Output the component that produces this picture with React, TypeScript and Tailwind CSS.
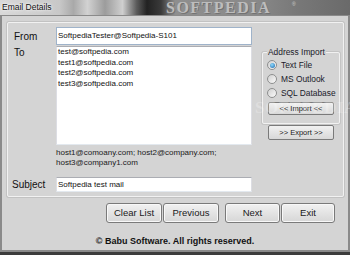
import React from "react";

const sans = "font-['Liberation_Sans',Arial,sans-serif]";

function Radio({ checked }: { checked?: boolean }) {
    return (
        <span className="flex h-[10px] w-[10px] shrink-0 items-center justify-center rounded-full border border-[#8e8f8f] bg-linear-to-br from-[#cfcfcf] to-[#fbfbfb]">
            {checked && (
                <span className="h-[5px] w-[5px] rounded-full bg-[radial-gradient(circle_at_40%_35%,#8fdcff,#1c64a8)]" />
            )}
        </span>
    );
}

function WinButton({ label, className }: { label: string; className: string }) {
    return (
        <button
            className={`${className} flex h-[20px] items-center justify-center rounded-[3px] border border-[#7a7a7a] bg-linear-to-b from-[#f1f1f1] to-[#d6d6d6] text-[9.5px] leading-none text-[#1a1a1a] shadow-[inset_0_0_0_1px_#f8f8f8]`}
        >
            {label}
        </button>
    );
}

export default function App() {
    const addresses = ["test@softpedia.com", "test1@softpedia.com", "test2@softpedia.com", "test3@softpedia.com"];
    const sources = ["Text File", "MS Outlook", "SQL Database"];

    return (
        <div className={`${sans} relative h-[255px] w-[350px] overflow-hidden bg-[#3c3c3c]`}>
            {/* glass title bar */}
            <div className="relative flex h-[15px] items-center overflow-hidden bg-[linear-gradient(90deg,#d9d9d9_0%,#c8c8c8_17%,#a9a9a9_21%,#d2d2d2_25%,#9c9c9c_30%,#cfcfcf_35%,#5c5c5c_39%,#222222_42%,#3a3a3a_46%,#8e8e8e_50%,#8a8a8a_72%,#777777_86%,#6a6a6a_100%)] pl-[2px]">
                <span className="relative z-10 text-[8.5px] text-[#111] [text-shadow:0_0_4px_#fff,0_0_2px_#fff]">Email Details</span>
                <span className="absolute left-[166px] top-[0px] font-['Liberation_Serif',serif] text-[16px] font-bold leading-none tracking-[1.5px] text-[#bdbdbd] [text-shadow:1px_1px_0_#727272]">
                    SOFTPEDIA
                </span>
                <span className="absolute left-[292px] top-[1px] text-[5px] text-[#cfcfcf]">®</span>
            </div>

            {/* window */}
            <div className="h-[237px] border-x-2 border-t border-b-2 border-[#8a8a8a] bg-[#d4d4d4] pl-[5px] pt-[6px]">
                <div className="flex h-[175px] w-[337px] rounded-[2px] border border-[#f1f1f1] shadow-[0_0_0_1px_#c2c2c2]">
                    {/* left side */}
                    <div className="flex w-[244px] flex-col pt-[4px]">
                        <div className="flex h-[18px] items-center">
                            <span className="w-[48px] pl-[6px] text-[10px] text-[#111]">From</span>
                            <div className="flex h-[18px] w-[196px] items-center border border-[#9fb3ca] bg-white pl-[1px] text-[8px] text-[#111]">
                                SoftpediaTester@Softpedia-S101
                            </div>
                        </div>
                        <div className="mt-[1px] flex">
                            <span className="w-[48px] pl-[6px] pt-[1px] text-[10px] leading-[12px] text-[#111]">To</span>
                            <div className="h-[99px] w-[196px] border border-t-[#abadb3] border-x-[#dcdde3] border-b-[#e3e9ef] bg-white pl-[1px] text-[8px] leading-[10.5px] text-[#111]">
                                {addresses.map((a) => (
                                    <div key={a}>{a}</div>
                                ))}
                            </div>
                        </div>
                        <div className="ml-[48px] mt-[3px] text-[8px] leading-[10px] text-[#1a1a1a]">
                            <div>host1@comoany.com; host2@company.com;</div>
                            <div>host3@company1.com</div>
                        </div>
                        <div className="mt-[9px] flex h-[15px] items-center">
                            <span className="w-[48px] pl-[4px] text-[10px] text-[#111]">Subject</span>
                            <div className="flex h-[15px] w-[196px] items-center border border-t-[#abadb3] border-x-[#dcdde3] border-b-[#e3e9ef] bg-white pl-[1px] text-[8px] text-[#111]">
                                Softpedia test mail
                            </div>
                        </div>
                    </div>

                    {/* address import */}
                    <div className="ml-[10px] mt-[29px] flex flex-col">
                        <div className="relative h-[72px] w-[78px] rounded-[2px] border border-[#f1f1f1] shadow-[0_0_0_1px_#c4c4c4] pl-[4px] pt-[5px]">
                            <span className="absolute left-[4px] top-[-6px] bg-[#d4d4d4] px-[1px] text-[8.4px] leading-[10px] text-[#1a1a2a]">
                                Address Import
                            </span>
                            {sources.map((s, i) => (
                                <div key={s} className="flex h-[14px] items-center gap-[4px]">
                                    <Radio checked={i === 0} />
                                    <span className="text-[8.4px] text-[#1a1a2a]">{s}</span>
                                </div>
                            ))}
                            <button className="ml-[1px] mt-[2px] flex h-[13px] w-[66px] items-center justify-center rounded-[2px] border border-[#7a7a7a] bg-linear-to-b from-[#f1f1f1] to-[#d8d8d8] text-[7.5px] leading-none text-[#1a1a1a]">
                                {"<< Import <<"}
                            </button>
                        </div>
                        <button className="ml-[6px] mt-[1px] flex h-[15px] w-[66px] items-center justify-center rounded-[2px] border border-[#7a7a7a] bg-linear-to-b from-[#f1f1f1] to-[#d8d8d8] text-[7.5px] leading-none text-[#1a1a1a]">
                            {">> Export >>"}
                        </button>
                    </div>
                </div>

                {/* buttons */}
                <div className="ml-[99px] mt-[6px] flex">
                    <WinButton label="Clear List" className="w-[56px]" />
                    <WinButton label="Previous" className="ml-[1px] w-[56px]" />
                    <WinButton label="Next" className="ml-[6px] w-[55px]" />
                    <WinButton label="Exit" className="ml-[1px] w-[54px]" />
                </div>

                <div className="mt-[13px] pr-[5px] text-center text-[9px] font-bold leading-[10px] text-[#111]">
                    © Babu Software. All rights reserved.
                </div>
            </div>

            {/* faint watermark */}
            <span className="pointer-events-none absolute left-[255px] top-[99px] font-['Liberation_Serif',serif] text-[17px] font-bold leading-none tracking-[0.5px] text-white/25">
                SOFTPEDIA
            </span>
        </div>
    );
}
